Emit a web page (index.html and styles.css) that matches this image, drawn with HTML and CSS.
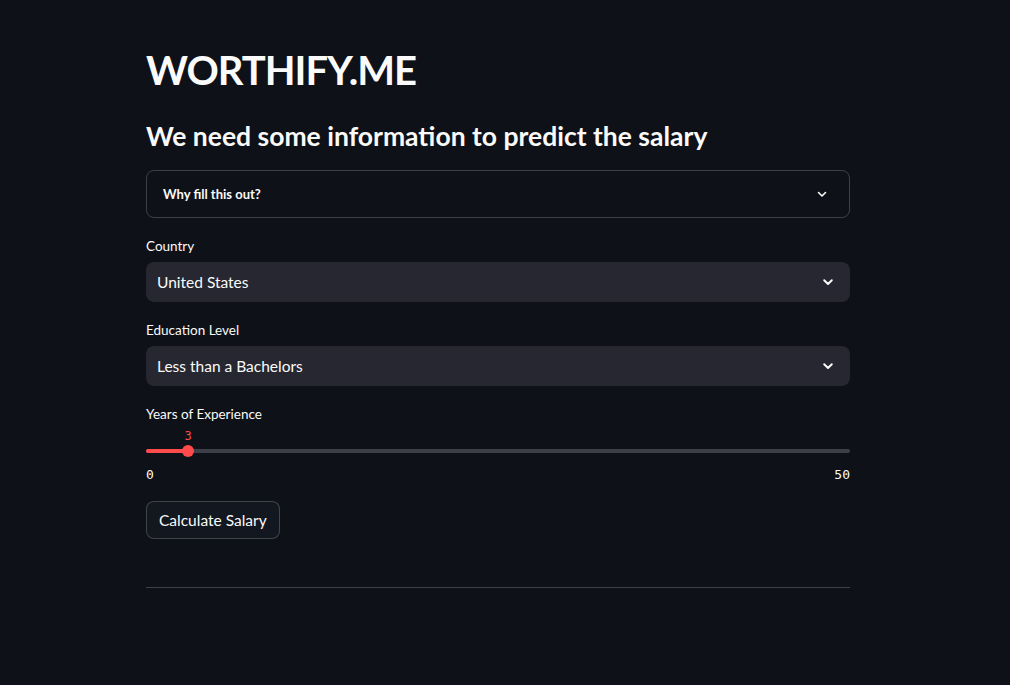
FILE: index.html
```html
<!DOCTYPE html>
<html>
<head>
<meta charset="utf-8">
<link rel="stylesheet" href="styles.css">
</head>
<body>
<div class="app">
  <main class="block">
    <h1 class="title">WORTHIFY.ME</h1>
    <h3 class="subtitle">We need some information to predict the salary</h3>

    <div class="expander">
      <span class="exp-label">Why fill this out?</span>
      <svg class="chev" width="16" height="16" viewBox="0 0 16 16"><path d="M4.5 6.5 L8 10 L11.5 6.5" fill="none" stroke="#fafafa" stroke-width="1.6" stroke-linecap="round" stroke-linejoin="round"/></svg>
    </div>

    <div class="field">
      <label class="label">Country</label>
      <div class="select">
        <span>United States</span>
        <svg class="chev" width="16" height="16" viewBox="0 0 16 16"><path d="M4.2 6.2 L8 10 L11.8 6.2" fill="none" stroke="#fafafa" stroke-width="2" stroke-linecap="round" stroke-linejoin="round"/></svg>
      </div>
    </div>

    <div class="field">
      <label class="label">Education Level</label>
      <div class="select">
        <span>Less than a Bachelors</span>
        <svg class="chev" width="16" height="16" viewBox="0 0 16 16"><path d="M4.2 6.2 L8 10 L11.8 6.2" fill="none" stroke="#fafafa" stroke-width="2" stroke-linecap="round" stroke-linejoin="round"/></svg>
      </div>
    </div>

    <div class="field slider-field">
      <label class="label">Years of Experience</label>
      <div class="slider">
        <div class="track">
          <div class="fill" style="width: 6%"></div>
          <div class="thumb" style="left: 6%">
            <span class="thumb-val">3</span>
          </div>
        </div>
      </div>
      <div class="ticks">
        <span>0</span>
        <span>50</span>
      </div>
    </div>

    <div class="btn-row">
      <button class="btn">Calculate Salary</button>
    </div>

    <hr class="divider">
  </main>
</div>
</body>
</html>
```

FILE: styles.css
```css
* { box-sizing: border-box; }
html, body {
  margin: 0;
  padding: 0;
  background: #0e1117;
  color: #fafafa;
  font-family: "Lato", "Noto Sans", sans-serif;
  height: 100%;
}
.app {
  padding-right: 14px;
}
.block {
  width: 704px;
  margin: 0 auto;
  padding-top: 42px;
  display: flex;
  flex-direction: column;
}
.title {
  margin: 0;
  font-size: 40px;
  font-weight: 700;
  line-height: 56px;
  letter-spacing: -1px;
}
.subtitle {
  margin: 0;
  margin-top: 18px;
  font-size: 26.5px;
  font-weight: 700;
  line-height: 40px;
}
.expander {
  margin-top: 14px;
  height: 48px;
  border: 1px solid rgba(250,250,250,0.2);
  border-radius: 8px;
  display: flex;
  align-items: center;
  justify-content: space-between;
  padding: 0 19px 0 16px;
}
.exp-label {
  font-size: 13px;
  font-weight: 700;
}
.field {
  margin-top: 19px;
  display: flex;
  flex-direction: column;
}
.label {
  font-size: 13.5px;
  line-height: 18px;
  height: 18px;
  margin-bottom: 7px;
}
.select {
  height: 40px;
  background: #262730;
  border-radius: 8px;
  display: flex;
  align-items: center;
  justify-content: space-between;
  padding: 0 14px 0 11px;
  font-size: 15.5px;
}
.slider-field .label { margin-bottom: 0; }
.slider {
  height: 40px;
  display: flex;
  align-items: flex-end;
  padding-bottom: 10px;
}
.track {
  position: relative;
  width: 100%;
  height: 4px;
  background: #3e4049;
  border-radius: 2px;
}
.fill {
  position: absolute;
  left: 0; top: 0; bottom: 0;
  background: #ff4b4b;
  border-radius: 2px;
}
.thumb {
  position: absolute;
  top: 50%;
  width: 12px;
  height: 12px;
  margin-left: -6px;
  margin-top: -6px;
  background: #ff4b4b;
  border-radius: 50%;
}
.thumb-val {
  position: absolute;
  bottom: 14px;
  left: 50%;
  transform: translateX(-50%);
  color: #ff4b4b;
  font-family: "DejaVu Sans Mono", monospace;
  font-size: 12px;
  line-height: 14px;
}
.ticks {
  display: flex;
  justify-content: space-between;
  font-family: "DejaVu Sans Mono", monospace;
  font-size: 13px;
  line-height: 16px;
  margin-top: 4px;
  color: #fafafa;
}
.btn-row {
  margin-top: 18px;
  display: flex;
}
.btn {
  height: 38px;
  padding: 0 12px;
  background: #13171f;
  color: #fafafa;
  border: 1px solid rgba(250,250,250,0.2);
  border-radius: 8px;
  font-family: "Lato", "Noto Sans", sans-serif;
  font-size: 15.5px;
}
.divider {
  margin: 48px 0 0;
  border: none;
  border-top: 1px solid rgba(250,250,250,0.2);
  height: 0;
}
```
